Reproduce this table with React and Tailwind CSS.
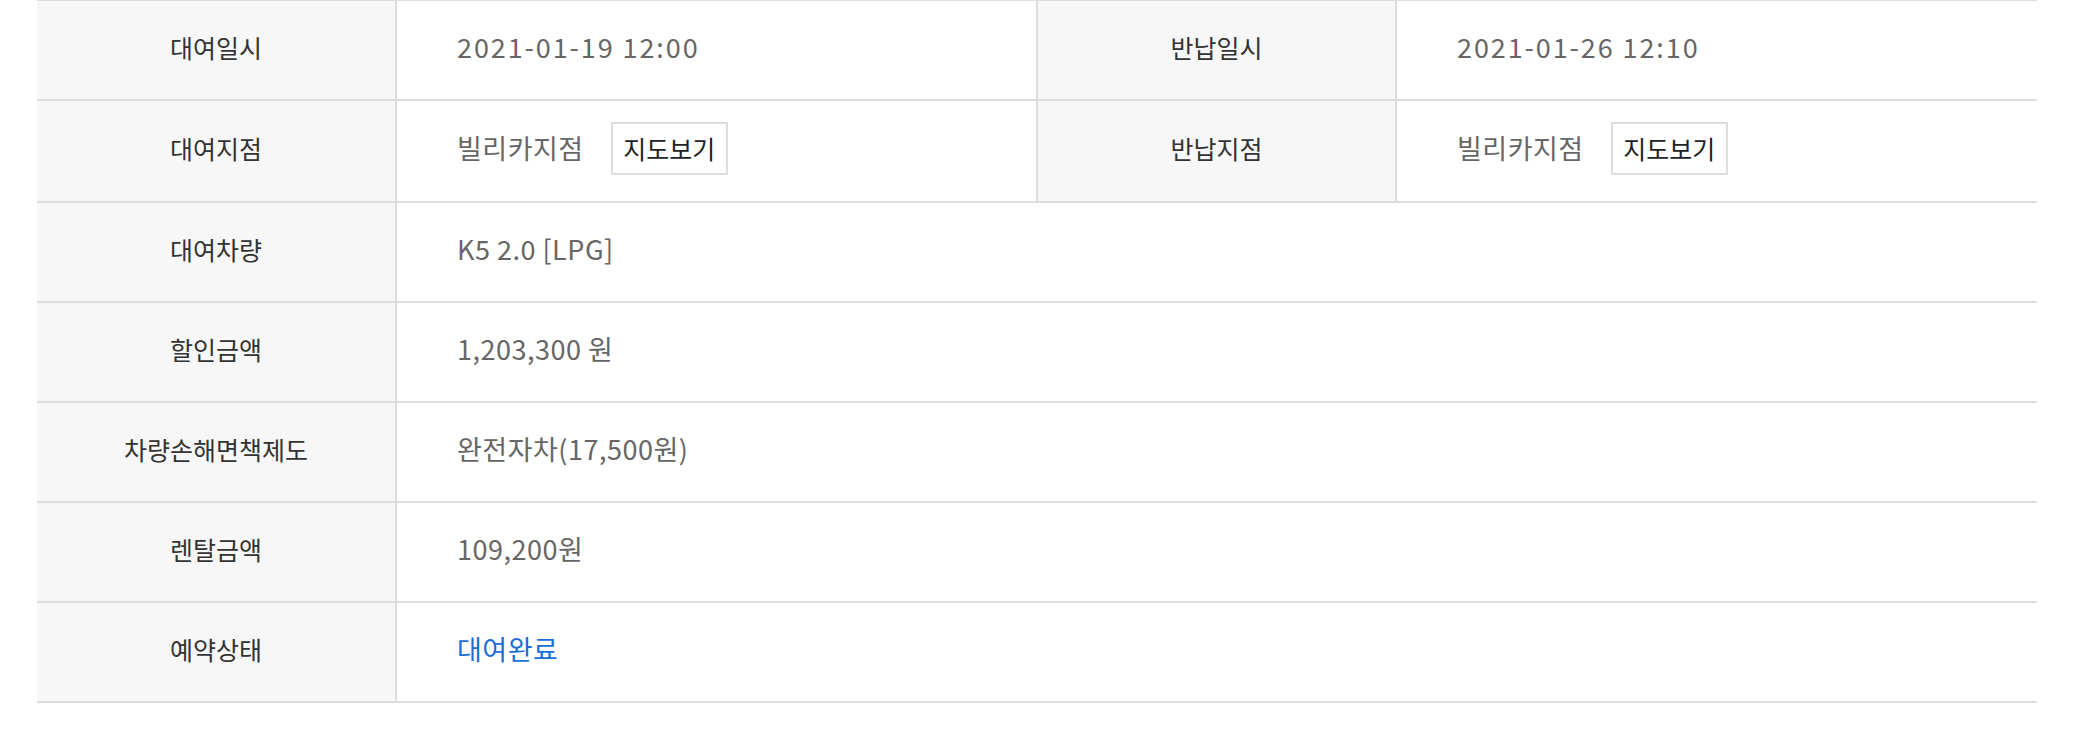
const font = "font-['Noto_Sans_CJK_KR','Noto_Sans',sans-serif]";

function Label({ children, className = "" }) {
  return (
    <div className={`flex items-center justify-center bg-[#f7f7f7] pb-[5px] text-[25px] text-[#333] ${className}`}>
      {children}
    </div>
  );
}

function Value({ children, color = "text-[#666]", tracking = "tracking-[0.5px]" }) {
  return (
    <div className={`flex items-center pb-[5px] pl-[60px] text-[27px] ${tracking} ${color}`}>
      {children}
    </div>
  );
}

function MapButton() {
  return (
    <button className="ml-[27px] flex h-[53px] w-[117px] items-center justify-center border-2 border-[#ddd] bg-white text-[25px] tracking-normal text-[#222]">
      지도보기
    </button>
  );
}

const singleRows = [
  { label: "대여차량", value: "K5 2.0 [LPG]" },
  { label: "할인금액", value: "1,203,300 원" },
  { label: "차량손해면책제도", value: "완전자차(17,500원)" },
  { label: "렌탈금액", value: "109,200원" },
];

export default function App() {
  return (
    <div className={`min-h-[744px] w-full bg-white ${font}`}>
      <div className="-mt-px ml-[37px] w-[2000px] border-t-2 border-[#ddd]">
        {/* 대여/반납 일시 */}
        <div className="grid h-[100px] grid-cols-[360px_639px_361px_640px] border-b-2 border-[#ddd]">
          <Label className="border-r-2 border-[#ddd]">대여일시</Label>
          <Value tracking="tracking-[1.9px]">2021-01-19 12:00</Value>
          <Label className="border-x-2 border-[#ddd]">반납일시</Label>
          <Value tracking="tracking-[1.9px]">2021-01-26 12:10</Value>
        </div>

        {/* 지점 */}
        <div className="grid h-[102px] grid-cols-[360px_639px_361px_640px] border-b-2 border-[#ddd]">
          <Label className="border-r-2 border-[#ddd]">대여지점</Label>
          <Value>
            빌리카지점
            <MapButton />
          </Value>
          <Label className="border-x-2 border-[#ddd]">반납지점</Label>
          <Value>
            빌리카지점
            <MapButton />
          </Value>
        </div>

        {singleRows.map((row) => (
          <div key={row.label} className="grid h-[100px] grid-cols-[360px_1fr] border-b-2 border-[#ddd]">
            <Label className="border-r-2 border-[#ddd]">{row.label}</Label>
            <Value>{row.value}</Value>
          </div>
        ))}

        <div className="grid h-[100px] grid-cols-[360px_1fr] border-b-2 border-[#ddd]">
          <Label className="border-r-2 border-[#ddd]">예약상태</Label>
          <Value color="text-[#1a6dd6]">대여완료</Value>
        </div>
      </div>
    </div>
  );
}
